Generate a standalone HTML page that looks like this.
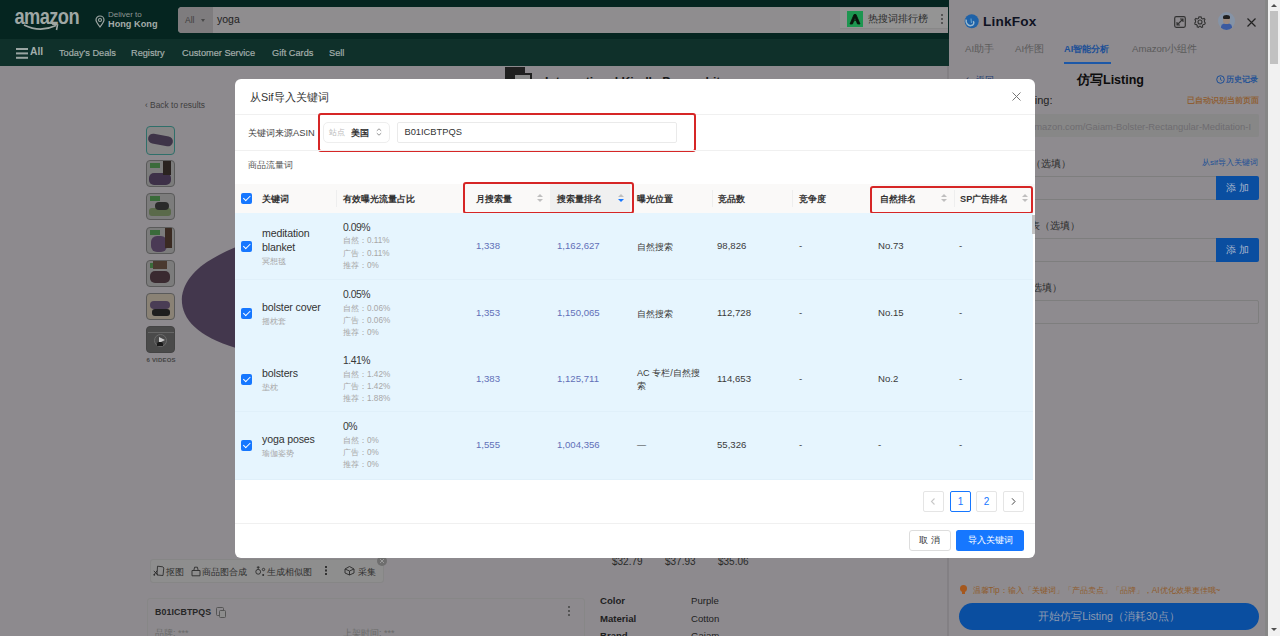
<!DOCTYPE html>
<html><head><meta charset="utf-8">
<style>
*{box-sizing:border-box;margin:0;padding:0}
html,body{width:1280px;height:636px;overflow:hidden;background:#8d8a8e;font-family:"Liberation Sans",sans-serif;color:#333}
.a{position:absolute;white-space:nowrap}
#top{position:absolute;left:0;top:0;width:949px;height:39px;background:#052520}
#nav{position:absolute;left:0;top:39px;width:949px;height:27px;background:#0f302a}
#panel{position:absolute;left:949px;top:0;width:319px;height:636px;background:#8e8b8f}
#sb{position:absolute;left:1268px;top:0;width:12px;height:636px;background:#f1f1f1}
#modal{position:absolute;left:235px;top:79px;width:800px;height:479px;background:#fff;border-radius:6px;overflow:hidden}
.m{position:absolute;white-space:nowrap}
.hd{font-weight:bold;font-size:9.2px;color:#333}
.cb{position:absolute;width:11px;height:11px;background:#1677ff;border-radius:2px}
.cb:after{content:"";position:absolute;left:3.5px;top:1.3px;width:3px;height:5.5px;border:solid #fff;border-width:0 1.6px 1.6px 0;transform:rotate(45deg)}
.row{position:absolute;left:0;width:798px;height:66px;background:#e6f5fe;border-bottom:1px solid #e0f0fa}
.t{font-size:10.6px;color:#333;letter-spacing:-0.15px}
.t2{font-size:10.4px;color:#383838;letter-spacing:-0.5px}
.nz{font-size:9.1px;color:#3a3a3a}
.s{font-size:8.2px;color:#a6a6a6}
.v{font-size:9.6px;color:#6270b8}
.n{font-size:9.6px;color:#3a3a3a}
.sort{position:absolute;width:6px;height:9px}
.sort:before{content:"";position:absolute;left:0;top:0;border-left:3px solid transparent;border-right:3px solid transparent;border-bottom:3.5px solid #bfbfbf}
.sort:after{content:"";position:absolute;left:0;top:5px;border-left:3px solid transparent;border-right:3px solid transparent;border-top:3.5px solid #bfbfbf}
.sort.dn:after{border-top-color:#1677ff}
.red{position:absolute;border:2px solid #d62626;border-radius:3px}
.pg{position:absolute;top:412px;width:21px;height:21px;border:1px solid #e5e5e5;border-radius:2px;font-size:10px;text-align:center;line-height:19px;color:#333}
.th{position:absolute;left:146px;width:29px;height:27px;border:1px solid #5a5a5a;border-radius:4px;background:#7c7c7c;overflow:hidden}
.th i{position:absolute;display:block}
.tb{font-size:9.2px;color:#303030}
.sp{font-size:9.6px;color:#1e1e1e}
.tab{top:43px;font-size:9.6px;color:#5a5a5a}
.btn{left:267px;width:43px;height:24px;background:#0a4ea0;color:#a9b6cc;font-size:10px;text-align:center;line-height:24px;border-radius:0 2px 2px 0}
</style></head><body>
<!-- amazon top -->
<div id="top">
  <div class="a" style="left:14.5px;top:4px;font-size:18.3px;font-weight:bold;color:#9fa7a4;letter-spacing:-0.6px;transform:scaleY(1.2);transform-origin:0 0">amazon</div>
  <svg class="a" style="left:22px;top:22px" width="40" height="10" viewBox="0 0 40 10"><path d="M2 3 Q18 11 34 3.5" stroke="#9fa7a4" stroke-width="1.9" fill="none"/><path d="M30 2 L35.5 2.8 L34.5 8" stroke="#9fa7a4" stroke-width="1.6" fill="none"/></svg>
  <svg class="a" style="left:95px;top:15px" width="10" height="13" viewBox="0 0 10 13"><path d="M5 12 C2 8 1 6.5 1 5 A4 4 0 0 1 9 5 C9 6.5 8 8 5 12Z" stroke="#9fa7a4" stroke-width="1.2" fill="none"/><circle cx="5" cy="5" r="1.5" stroke="#9fa7a4" stroke-width="1.1" fill="none"/></svg>
  <div class="a" style="left:108px;top:10px;font-size:8px;color:#8e9693">Deliver to</div>
  <div class="a" style="left:108px;top:19px;font-size:9.2px;font-weight:bold;color:#a3aba8">Hong Kong</div>
  <div class="a" style="left:178px;top:7px;width:770px;height:26px;background:#8f8d8f;border-radius:4px 0 0 4px"></div>
  <div class="a" style="left:178px;top:7px;width:35px;height:26px;background:#7e7c7e;border-radius:4px 0 0 4px"></div>
  <div class="a" style="left:185px;top:15px;font-size:8.5px;color:#3e3e3e">All</div>
  <div class="a" style="left:201px;top:19px;width:0;height:0;border-left:2.5px solid transparent;border-right:2.5px solid transparent;border-top:3px solid #4a4a4a"></div>
  <div class="a" style="left:217px;top:13px;font-size:10.5px;color:#222">yoga</div>
  <div class="a" style="left:840px;top:8px;width:108px;height:21px;background:#949494;border-bottom:1px solid #888"></div>
  <div class="a" style="left:847px;top:11px;width:16px;height:16px;background:#1d9650"></div>
  <svg class="a" style="left:847px;top:11px" width="16" height="16" viewBox="0 0 16 16"><path d="M3 13 L7 3.5 L9 3.5 L13 13 L10.5 13 L8 6.5 L5.5 13 Z M6.5 10 L10 9" fill="#0a140c" stroke="#0a140c" stroke-width="0.8"/></svg>
  <div class="a" style="left:868px;top:13px;font-size:9.5px;color:#2e2e2e">热搜词排行榜</div>
  <div class="a" style="left:941px;top:14px;width:2px;height:2px;background:#555;box-shadow:0 4px 0 #555,0 8px 0 #555"></div>
</div>
<div id="nav">
  <div class="a" style="left:16px;top:9.3px;width:11.5px;height:1.5px;background:#9aa5a2;box-shadow:0 4.4px 0 #9aa5a2,0 8.8px 0 #9aa5a2"></div>
  <div class="a" style="left:30px;top:7px;font-size:10.3px;font-weight:bold;color:#a3aeab">All</div>
  <div class="a" style="left:59px;top:8px;font-size:9.2px;color:#a3aeab;top:8.5px;-webkit-text-stroke:0.2px #a3aeab">Today's Deals</div>
  <div class="a" style="left:131px;top:8px;font-size:9.2px;color:#a3aeab;top:8.5px;-webkit-text-stroke:0.2px #a3aeab">Registry</div>
  <div class="a" style="left:182px;top:8px;font-size:9.2px;color:#a3aeab;top:8.5px;-webkit-text-stroke:0.2px #a3aeab">Customer Service</div>
  <div class="a" style="left:272px;top:8px;font-size:9.2px;color:#a3aeab;top:8.5px;-webkit-text-stroke:0.2px #a3aeab">Gift Cards</div>
  <div class="a" style="left:329px;top:8px;font-size:9.2px;color:#a3aeab;top:8.5px;-webkit-text-stroke:0.2px #a3aeab">Sell</div>
</div>
<!-- amazon page background -->
<div class="a" style="left:145px;top:100px;font-size:8.4px;color:#3e3e3e">‹ Back to results</div>
<div class="a" style="left:505px;top:67px;width:20px;height:14px;background:#202020"></div>
<div class="a" style="left:513px;top:73px;width:19px;height:14px;border:2px solid #202020;background:#8a8a8a"></div>
<div class="a" style="left:545px;top:75px;font-size:12.2px;font-weight:bold;color:#1a1a1a">International Kindle Paperwhite</div>

<!-- thumbnails -->
<div class="a" style="left:146px;top:126px;width:29px;height:29px;border:1.5px solid #2f6f6a;border-radius:4px;background:#868686"></div>
<div class="a" style="left:148px;top:135px;width:25px;height:10px;background:#3e3448;border-radius:5px;transform:rotate(10deg)"></div>
<div class="th" style="top:160px"><i style="left:2px;top:12px;width:22px;height:12px;background:#3d3048;border-radius:5px"></i><i style="left:3px;top:2px;width:10px;height:5px;background:#3a6b3a"></i><i style="left:16px;top:0;width:8px;height:14px;background:#2a2320"></i></div>
<div class="th" style="top:193px"><i style="left:2px;top:14px;width:22px;height:8px;background:#5a6a4a;border-radius:3px"></i><i style="left:3px;top:2px;width:10px;height:5px;background:#3a6b3a"></i><i style="left:8px;top:8px;width:14px;height:8px;background:#2a2a2a;border-radius:4px"></i></div>
<div class="th" style="top:227px"><i style="left:4px;top:8px;width:16px;height:16px;background:#4a3a55;border-radius:6px"></i><i style="left:3px;top:2px;width:10px;height:5px;background:#3a6b3a"></i><i style="left:18px;top:0;width:7px;height:20px;background:#3a2a22"></i></div>
<div class="th" style="top:260px"><i style="left:3px;top:10px;width:20px;height:12px;background:#3a2a30;border-radius:5px"></i><i style="left:3px;top:2px;width:10px;height:5px;background:#3a6b3a"></i><i style="left:6px;top:0;width:14px;height:8px;background:#4a3a30"></i></div>
<div class="th" style="top:293px;background:#8a8275"><i style="left:3px;top:7px;width:20px;height:8px;background:#4a3d55;border-radius:4px"></i><i style="left:5px;top:15px;width:18px;height:7px;background:#1e1e1e;border-radius:3px"></i></div>
<div class="th" style="top:326px;background:#4a4a4a;border-color:#444"><i style="left:1px;top:5px;width:26px;height:1px;background:#666"></i><i style="left:7px;top:7px;width:13px;height:13px;border:1px solid #6a6a6a;border-radius:50%;background:transparent"></i><i style="left:12px;top:10px;width:0;height:0;border-left:6px solid #c8c8c8;border-top:3.5px solid transparent;border-bottom:3.5px solid transparent;background:transparent"></i><i style="left:10px;top:15px;width:6px;height:4px;background:#1a1a1a;border-radius:2px 2px 0 0"></i></div>
<div class="a" style="left:146.5px;top:357px;font-size:6px;font-weight:bold;color:#444;letter-spacing:0.2px">6 VIDEOS</div>
<svg class="a" style="left:175px;top:240px" width="64" height="115" viewBox="175 240 64 115"><path d="M236 247 C210 258 186 272 182 296 C180 318 196 336 236 348 Z" fill="#43374d"/></svg>
<!-- bottom toolbar -->
<div class="a" style="left:150px;top:559px;width:234px;height:24px;background:#8e8e8e;border:1px solid #868686;border-radius:3px"></div>
<div class="a tb" style="left:165.5px;top:566px">抠图</div>
<div class="a tb" style="left:202px;top:566px">商品图合成</div>
<div class="a tb" style="left:266.5px;top:566px">生成相似图</div>
<div class="a tb" style="left:358px;top:566px">采集</div>
<svg class="a" style="left:152.5px;top:565px" width="12" height="12" viewBox="0 0 12 12"><path d="M4.5 1.2 L9.8 1.8 L10.8 3 L10 10.5 L4 10 Z" stroke="#2e2e2e" stroke-width="0.9" fill="none"/><path d="M0.8 6 L5 9.8 M4.2 5.6 L1 9.8" stroke="#2e2e2e" stroke-width="1"/><circle cx="1.3" cy="9.8" r="0.9" fill="#2e2e2e"/></svg>
<svg class="a" style="left:190.5px;top:565.5px" width="10" height="11" viewBox="0 0 10 11"><path d="M1 9.8 L1 4.5 L9 4.5 L9 9.8 Z M2.8 4.5 L3.6 1.2 L6.4 1.2 L7.2 4.5" stroke="#2e2e2e" stroke-width="0.9" fill="none"/></svg>
<svg class="a" style="left:254.5px;top:565px" width="11" height="12" viewBox="0 0 11 12"><circle cx="3.2" cy="6.8" r="2.4" stroke="#2e2e2e" stroke-width="0.9" fill="none"/><path d="M3.2 4.4 L3.2 1.2 M1.8 2.3 L4.6 2.3" stroke="#2e2e2e" stroke-width="0.9"/><circle cx="8.5" cy="4.5" r="1.2" stroke="#2e2e2e" stroke-width="0.9" fill="none"/><circle cx="8.2" cy="10" r="1" fill="#2e2e2e"/></svg>
<div class="a" style="left:325px;top:566px;width:1.5px;height:1.5px;background:#333;box-shadow:0 3.5px 0 #333,0 7px 0 #333"></div>
<svg class="a" style="left:344px;top:565px" width="11" height="11" viewBox="0 0 11 11"><path d="M1 4 L5.5 1.5 L10 4 L10 8 L5.5 10 L1 8 Z M1 4 L5.5 6 L10 4 M5.5 6 L5.5 10" stroke="#333" stroke-width="1" fill="none"/></svg>
<div class="a" style="left:377px;top:556px;width:10px;height:10px;border-radius:50%;background:#6e6e6e"></div>
<svg class="a" style="left:379px;top:558px" width="6" height="6" viewBox="0 0 6 6"><path d="M1 1L5 5M5 1L1 5" stroke="#9a9a9a" stroke-width="1"/></svg>
<!-- card -->
<div class="a" style="left:147px;top:598px;width:438px;height:60px;border:1px solid #878787;border-radius:3px"></div>
<div class="a" style="left:155px;top:607px;font-size:8.8px;font-weight:bold;color:#262626;letter-spacing:0.1px">B01ICBTPQS</div>
<div class="a" style="left:216px;top:607px;width:8px;height:9px;border:1.2px solid #555;border-radius:1.5px"></div>
<div class="a" style="left:219px;top:610px;width:7px;height:8px;border:1.2px solid #555;border-radius:1.5px;background:#8c8c8c"></div>
<div class="a" style="left:155px;top:627px;font-size:9px;color:#6a6a6a">品牌: ***</div>
<div class="a" style="left:343px;top:627px;font-size:9px;color:#6a6a6a">上架时间: ***</div>
<div class="a" style="left:568px;top:606px;width:2px;height:2px;background:#555;box-shadow:0 4px 0 #555,0 8px 0 #555"></div>
<!-- prices & specs -->
<div class="a" style="left:612px;top:555.5px;font-size:10px;color:#2a2a2a">$32.79</div>
<div class="a" style="left:665px;top:555.5px;font-size:10px;color:#2a2a2a">$37.93</div>
<div class="a" style="left:718px;top:555.5px;font-size:10px;color:#2a2a2a">$35.06</div>
<div class="a sp" style="left:600px;top:595px;font-weight:bold">Color</div>
<div class="a sp" style="left:691px;top:595px">Purple</div>
<div class="a sp" style="left:600px;top:612.5px;font-weight:bold">Material</div>
<div class="a sp" style="left:691px;top:612.5px">Cotton</div>
<div class="a sp" style="left:600px;top:630px;font-weight:bold">Brand</div>
<div class="a sp" style="left:691px;top:630px">Gaiam</div>

<div id="panel">
<div class="a" style="left:-2px;top:66px;width:2px;height:570px;background:#838084"></div>
<div class="a" style="left:316px;top:0;width:3px;height:636px;background:#868686"></div>
<svg class="a" style="left:15px;top:13.5px" width="16" height="16" viewBox="0 0 16 16"><circle cx="7.7" cy="7.3" r="7" fill="#1f62a8"/><path d="M2.2 5.5 C1.5 9 4 12 7 11.6 C9.5 11.3 10.5 9 9.3 7.2" stroke="#9bb8cc" stroke-width="1.5" fill="none"/><path d="M7 4.5 L7.5 9" stroke="#5d9ccc" stroke-width="1.2"/></svg>
<div class="a" style="left:34px;top:13.5px;font-size:13.6px;font-weight:bold;color:#0e1222;letter-spacing:0.2px">LinkFox</div>
<svg class="a" style="left:225px;top:16px" width="12" height="12" viewBox="0 0 12 12"><rect x="0.7" y="0.7" width="10.6" height="10.6" rx="1.5" stroke="#333" stroke-width="1.2" fill="none"/><path d="M3 9 L9 3 M6 3 L9 3 L9 6 M3 6 L3 9 L6 9" stroke="#333" stroke-width="1.1" fill="none"/></svg>
<svg class="a" style="left:245px;top:16px" width="12" height="12" viewBox="0 0 12 12"><path d="M6 0.8 L7.2 1 L7.6 2.4 L8.8 3 L10.1 2.4 L10.9 3.4 L10.3 4.7 L10.6 6 L11.3 7.1 L10.7 8.2 L9.3 8.5 L8.5 9.6 L8.6 11 L7.4 11.3 L6.5 10.3 L5.3 10.3 L4.4 11.3 L3.2 10.9 L3.3 9.5 L2.4 8.6 L1 8.3 L0.8 7 L1.6 6 L1.5 4.7 L1 3.4 L1.9 2.5 L3.2 3 L4.5 2.4 L4.8 1 Z" stroke="#333" stroke-width="1.1" fill="none"/><circle cx="6" cy="6" r="2" stroke="#333" stroke-width="1.1" fill="none"/></svg>
<div class="a" style="left:269px;top:12px;width:17px;height:18px;border-radius:50%;background:#8593a6;overflow:hidden"><i style="position:absolute;left:3px;top:11px;width:11px;height:8px;border-radius:50% 50% 0 0;background:#3b5aa0"></i><i style="position:absolute;left:5px;top:4px;width:7px;height:8px;border-radius:45%;background:#9b8a80"></i><i style="position:absolute;left:5px;top:3px;width:7px;height:4px;border-radius:50% 50% 20% 20%;background:#1f1f1f"></i></div>
<svg class="a" style="left:298px;top:18px" width="9" height="9" viewBox="0 0 9 9"><path d="M0.5 0.5L8.5 8.5M8.5 0.5L0.5 8.5" stroke="#222" stroke-width="1.2"/></svg>
<div class="a tab" style="left:16px">AI助手</div>
<div class="a tab" style="left:66px">AI作图</div>
<div class="a tab" style="left:115px;color:#1c4f96;font-weight:bold;font-size:9.2px">AI智能分析</div>
<div class="a tab" style="left:183px">Amazon小组件</div>
<div class="a" style="left:115px;top:62px;width:47px;height:2px;background:#1c58a8"></div>
<div class="a" style="left:17px;top:74px;font-size:9.3px;color:#1e2f50">‹</div><div class="a" style="left:27px;top:74px;font-size:9.3px;color:#1c3a70">返回</div>
<div class="a" style="left:128px;top:72px;font-size:12.5px;font-weight:bold;color:#0c0c0c">仿写Listing</div>
<svg class="a" style="left:267px;top:75px" width="9" height="9" viewBox="0 0 9 9"><circle cx="4.5" cy="4.5" r="3.8" stroke="#1c4f96" stroke-width="1" fill="none"/><path d="M4.5 2.3 L4.5 4.7 L6.2 5.6" stroke="#1c4f96" stroke-width="0.9" fill="none"/></svg>
<div class="a" style="left:276.5px;top:74px;font-size:8.4px;color:#1c4f96;-webkit-text-stroke:0.25px #1c4f96">历史记录</div>
<div class="a" style="left:16px;top:93.5px;font-size:11px;color:#1e1e1e;width:87.5px;text-align:right">Listing:</div>
<div class="a" style="left:238px;top:94.5px;font-size:8px;color:#8e5b2c;-webkit-text-stroke:0.2px #8e5b2c">已自动识别当前页面</div>
<div class="a" style="left:16px;top:114px;width:294px;height:23px;background:#878787;border-radius:2px"></div>
<div class="a" style="left:16px;top:120.5px;font-size:9.4px;color:#6e6c70;width:286px;overflow:hidden;text-align:right;direction:rtl"><span style="direction:ltr;unicode-bidi:bidi-override">www.amazon.com/Gaiam-Bolster-Rectangular-Meditation-I</span></div>
<div class="a" style="left:16px;top:157.5px;font-size:9.6px;color:#2a2a2a;width:106px;text-align:right">关键词（选填）</div>
<div class="a" style="left:253px;top:157px;font-size:8px;color:#1c4f96">从sif导入关键词</div>
<div class="a" style="left:16px;top:176px;width:268px;height:24px;border:1px solid #7e7e7e;border-right:0;border-radius:2px 0 0 2px"></div>
<div class="a btn" style="top:176px">添 加</div>
<div class="a" style="left:16px;top:219.5px;font-size:9.6px;color:#2a2a2a;width:115px;text-align:right">参考表（选填）</div>
<div class="a" style="left:16px;top:238px;width:268px;height:24px;border:1px solid #7e7e7e;border-right:0;border-radius:2px 0 0 2px"></div>
<div class="a btn" style="top:238px">添 加</div>
<div class="a" style="left:16px;top:281.5px;font-size:9.6px;color:#2a2a2a;width:97.4px;text-align:right">品牌（选填）</div>
<div class="a" style="left:16px;top:300px;width:294px;height:24px;border:1px solid #7e7e7e;border-radius:2px"></div>
<div class="a" style="left:11px;top:585px;width:7px;height:7px;border-radius:50%;background:#a5581e"></div>
<div class="a" style="left:13px;top:591px;width:3px;height:3px;background:#a5581e"></div>
<div class="a" style="left:23.5px;top:584.5px;font-size:8.3px;color:#8e5b2c">温馨Tip：输入「关键词」「产品卖点」「品牌」，AI优化效果更佳哦~</div>
<div class="a" style="left:10px;top:603px;width:300px;height:27px;border-radius:14px;background:#0a4ea0"></div>
<div class="a" style="left:10px;top:609.5px;width:300px;text-align:center;font-size:10.6px;color:#8d9ab0">开始仿写Listing（消耗30点）</div>
</div>
<div id="sb"><div class="a" style="left:3px;top:4px;width:0;height:0;border-left:3px solid transparent;border-right:3px solid transparent;border-bottom:3px solid #505050"></div><div class="a" style="left:2px;top:11px;width:8px;height:53px;background:#c1c1c1"></div><div class="a" style="left:3px;top:628px;width:0;height:0;border-left:3px solid transparent;border-right:3px solid transparent;border-top:3px solid #505050"></div></div>

<!-- modal -->
<div id="modal">
  <div class="m" style="left:15px;top:12px;font-size:10.8px;color:#333">从Sif导入关键词</div>
  <svg class="m" style="left:777px;top:13px" width="9" height="9" viewBox="0 0 9 9"><path d="M0.5 0.5L8.5 8.5M8.5 0.5L0.5 8.5" stroke="#777" stroke-width="1"/></svg>
  <div class="m" style="left:0;top:35px;width:800px;height:1px;background:#f0f0f0"></div>
  <div class="m" style="left:13px;top:48px;font-size:9.3px;color:#444">关键词来源ASIN</div>
  <div class="m" style="left:88px;top:43px;width:67px;height:21px;border:1px solid #eee;border-radius:5px"></div>
  <div class="m" style="left:94px;top:48px;font-size:8px;color:#bbb">站点</div>
  <div class="m" style="left:116px;top:47.5px;font-size:9.3px;color:#1a1a1a;-webkit-text-stroke:0.25px #1a1a1a">美国</div>
  <svg class="m" style="left:141px;top:49px" width="6" height="8" viewBox="0 0 6 8"><path d="M0.8 2.8L3 0.8L5.2 2.8M0.8 5.2L3 7.2L5.2 5.2" stroke="#888" stroke-width="0.9" fill="none"/></svg>
  <div class="m" style="left:162px;top:43px;width:280px;height:21px;border:1px solid #eaeaea;border-radius:2px"></div>
  <div class="m" style="left:169.5px;top:48px;font-size:9.3px;color:#333">B01ICBTPQS</div>
  <div class="red" style="left:83px;top:34px;width:378px;height:39px"></div>
  <div class="m" style="left:0;top:71px;width:800px;height:1px;background:#f0f0f0"></div>
  <div class="m" style="left:13px;top:80px;font-size:9px;color:#555">商品流量词</div>
  <!-- table header -->
  <div class="m" style="left:0;top:105px;width:800px;height:29px;background:#faf9f8"></div>
  <div class="m" style="left:315px;top:105px;width:80px;height:29px;background:#f0f0f0"></div>
  <div class="cb" style="left:6px;top:114px"></div>
  <div class="m hd" style="left:27px;top:114px">关键词</div>
  <div class="m" style="left:101px;top:111px;width:1px;height:17px;background:#eee"></div>
  <div class="m hd" style="left:108px;top:114px">有效曝光流量占比</div>
  <div class="m hd" style="left:241px;top:114px">月搜索量</div>
  <div class="sort" style="left:302px;top:115px"></div>
  <div class="m hd" style="left:322px;top:114px">搜索量排名</div>
  <div class="sort dn" style="left:383px;top:115px"></div>
  <div class="m hd" style="left:402px;top:114px">曝光位置</div>
  <div class="m" style="left:476.5px;top:111px;width:1px;height:17px;background:#eee"></div>
  <div class="m" style="left:557px;top:111px;width:1px;height:17px;background:#eee"></div>
  <div class="m hd" style="left:483px;top:114px">竞品数</div>
  <div class="m hd" style="left:564px;top:114px">竞争度</div>
  <div class="m hd" style="left:645px;top:114px">自然排名</div>
  <div class="sort" style="left:706px;top:115px"></div>
  <div class="m" style="left:719px;top:111px;width:1px;height:17px;background:#eee"></div>
  <div class="m hd" style="left:725px;top:114px">SP广告排名</div>
  <div class="sort" style="left:787px;top:115px"></div>
  <div class="red" style="left:228px;top:103px;width:171px;height:32px"></div>
  <div class="red" style="left:635px;top:107px;width:163px;height:28px"></div>
  <!-- rows -->
  <div class="row" style="top:134px;height:67px"></div>
  <div class="row" style="top:200.7px;height:67px"></div>
  <div class="row" style="top:266.4px;height:67px"></div>
  <div class="row" style="top:333px;height:68px"></div>
<div class="cb" style="left:6px;top:162px"></div>
<div class="m t" style="left:27px;top:147.5px">meditation</div>
<div class="m t" style="left:27px;top:162.0px">blanket</div>
<div class="m s" style="left:27px;top:177.0px">冥想毯</div>
<div class="m t2" style="left:108px;top:143px">0.09%</div>
<div class="m s" style="left:108px;top:156px">自然：0.11%</div>
<div class="m s" style="left:108px;top:169px">广告：0.11%</div>
<div class="m s" style="left:108px;top:181px">推荐：0%</div>
<div class="m v" style="left:241px;top:161px">1,338</div>
<div class="m v" style="left:322px;top:161px">1,162,627</div>
<div class="m nz" style="left:402px;top:162px">自然搜索</div>
<div class="m n" style="left:482px;top:161px">98,826</div>
<div class="m n" style="left:564px;top:161px">-</div>
<div class="m n" style="left:643px;top:161px">No.73</div>
<div class="m n" style="left:724px;top:161px">-</div>
<div class="cb" style="left:6px;top:229px"></div>
<div class="m t" style="left:27px;top:221.8px">bolster cover</div>
<div class="m s" style="left:27px;top:236.8px">摇枕套</div>
<div class="m t2" style="left:108px;top:210px">0.05%</div>
<div class="m s" style="left:108px;top:224px">自然：0.06%</div>
<div class="m s" style="left:108px;top:236px">广告：0.06%</div>
<div class="m s" style="left:108px;top:248px">推荐：0%</div>
<div class="m v" style="left:241px;top:228px">1,353</div>
<div class="m v" style="left:322px;top:228px">1,150,065</div>
<div class="m nz" style="left:402px;top:229px">自然搜索</div>
<div class="m n" style="left:482px;top:228px">112,728</div>
<div class="m n" style="left:564px;top:228px">-</div>
<div class="m n" style="left:643px;top:228px">No.15</div>
<div class="m n" style="left:724px;top:228px">-</div>
<div class="cb" style="left:6px;top:295px"></div>
<div class="m t" style="left:27px;top:287.8px">bolsters</div>
<div class="m s" style="left:27px;top:302.8px">垫枕</div>
<div class="m t2" style="left:108px;top:276px">1.41%</div>
<div class="m s" style="left:108px;top:290px">自然：1.42%</div>
<div class="m s" style="left:108px;top:302px">广告：1.42%</div>
<div class="m s" style="left:108px;top:314px">推荐：1.88%</div>
<div class="m v" style="left:241px;top:294px">1,383</div>
<div class="m v" style="left:322px;top:294px">1,125,711</div>
<div class="m nz" style="left:402px;top:288px">AC 专栏/自然搜</div>
<div class="m nz" style="left:402px;top:301px">索</div>
<div class="m n" style="left:482px;top:294px">114,653</div>
<div class="m n" style="left:564px;top:294px">-</div>
<div class="m n" style="left:643px;top:294px">No.2</div>
<div class="m n" style="left:724px;top:294px">-</div>
<div class="cb" style="left:6px;top:361px"></div>
<div class="m t" style="left:27px;top:353.8px">yoga poses</div>
<div class="m s" style="left:27px;top:368.8px">瑜伽姿势</div>
<div class="m t2" style="left:108px;top:342px">0%</div>
<div class="m s" style="left:108px;top:356px">自然：0%</div>
<div class="m s" style="left:108px;top:368px">广告：0%</div>
<div class="m s" style="left:108px;top:380px">推荐：0%</div>
<div class="m v" style="left:241px;top:360px">1,555</div>
<div class="m v" style="left:322px;top:360px">1,004,356</div>
<div class="m nz" style="left:402px;top:361px">—</div>
<div class="m n" style="left:482px;top:360px">55,326</div>
<div class="m n" style="left:564px;top:360px">-</div>
<div class="m n" style="left:643px;top:360px">-</div>
<div class="m n" style="left:724px;top:360px">-</div>
  <div class="m" style="left:797px;top:136px;width:3px;height:19px;background:#c4c4c4"></div>
  <!-- pagination -->
  <div class="pg" style="left:688px"><svg width="19" height="19" viewBox="0 0 19 19" style="display:block"><path d="M10.5 6.5L7.5 9.5L10.5 12.5" stroke="#c8c8c8" stroke-width="1.1" fill="none"/></svg></div>
  <div class="pg" style="left:715px;border-color:#1677ff;color:#1677ff">1</div>
  <div class="pg" style="left:741px;color:#1677ff">2</div>
  <div class="pg" style="left:768px"><svg width="19" height="19" viewBox="0 0 19 19" style="display:block"><path d="M8 6.3L11 9.5L8 12.7" stroke="#333" stroke-width="0.9" fill="none"/></svg></div>
  <div class="m" style="left:0;top:443.5px;width:800px;height:1px;background:#f0f0f0"></div>
  <div class="m" style="left:674px;top:451px;width:42px;height:21px;border:1px solid #ddd;border-radius:3px;font-size:9.3px;text-align:center;line-height:19px;color:#333;letter-spacing:0.2px">取 消</div>
  <div class="m" style="left:721px;top:451px;width:68px;height:21px;background:#1677ff;border-radius:2.5px;font-size:9.1px;text-align:center;line-height:21px;color:#fff">导入关键词</div>
</div>
</body></html>
